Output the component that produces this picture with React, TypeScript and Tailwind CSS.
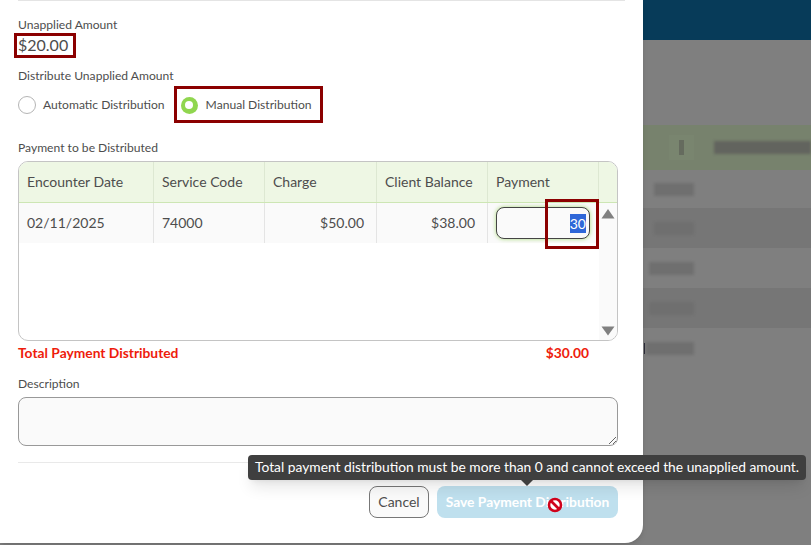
const COLUMNS = [
  { label: "Encounter Date", width: "w-[135px]" },
  { label: "Service Code", width: "w-[111px]" },
  { label: "Charge", width: "w-[112px]" },
  { label: "Client Balance", width: "w-[111px]" },
  { label: "Payment", width: "w-[111px]" },
];

const BACK_ROWS = [
  { width: "w-[40px]", height: "h-[38px]", bg: "bg-[#7f7f7f]" },
  { width: "w-[40px]", height: "h-10", bg: "bg-[#767676]" },
  { width: "w-[45px]", height: "h-10", bg: "bg-[#7f7f7f]" },
  { width: "w-[45px]", height: "h-10", bg: "bg-[#767676]" },
  { width: "w-[48px]", height: "h-10", bg: "bg-[#7f7f7f]" },
];

function Backdrop() {
  return (
    <div className="absolute inset-0 flex flex-col bg-[#7f7f7f]">
      <div className="h-10 bg-[#073b59]" />
      <div className="mt-[85px] flex h-[45px] items-center bg-[#77826d] pl-[669px]">
        <div className="flex h-[25px] w-[25px] items-center justify-center bg-[#79856f]">
          <div className="h-[15px] w-[5px] bg-[#656b5e]" />
        </div>
        <div className="ml-5 h-[13px] w-[97px] bg-[#62645e] blur-[1.5px]" />
      </div>
      {BACK_ROWS.map((row, i) => (
        <div key={i} className={`flex items-center justify-end pr-[117px] ${row.height} ${row.bg}`}>
          <div className={`h-[13px] bg-[#6f6f6f] blur-[1.5px] ${row.width}`} />
        </div>
      ))}
    </div>
  );
}

function ManualBox({ className }: { className: string }) {
  return <div className={`pointer-events-none absolute border-[3px] border-[#8b0000] ${className}`} />;
}

export default function App() {
  return (
    <div className="relative h-[545px] w-[811px] overflow-hidden font-['Lato',sans-serif] text-[#4d4d4d]">
      <Backdrop />

      {/* i-beam left behind on the page */}
      <div className="absolute left-[644px] top-[343px] h-[11px] w-px bg-[#2c2c3a]" />

      <div className="absolute left-0 top-0 flex h-[543px] w-[643px] flex-col rounded-br-[18px] bg-white px-[18px] shadow-md">
        <div className="h-px bg-[#e4e4e4]" />

        <div className="mt-4 text-[12.1px] leading-[15px]">Unapplied Amount</div>
        <div className="mt-[3px] text-base leading-5">$20.00</div>

        <div className="mt-[13px] text-[12.1px] leading-[15px]">Distribute Unapplied Amount</div>
        <div className="mt-[13px] flex h-[18px] items-center">
          <span className="h-[18px] w-[18px] rounded-full border border-[#b5b5b5] bg-white" />
          <span className="ml-[7px] text-[12.1px]">Automatic Distribution</span>
          <span className="ml-4 flex h-[17px] w-[17px] items-center justify-center rounded-full bg-[#90d64f]">
            <span className="h-2 w-2 rounded-full bg-white" />
          </span>
          <span className="ml-2 text-[12.1px]">Manual Distribution</span>
        </div>

        <div className="mt-[26px] text-[12.1px] leading-[15px]">Payment to be Distributed</div>

        <div className="mt-[6px] flex h-[180px] w-[600px] flex-col overflow-hidden rounded-[10px] border border-[#c4c4c4]">
          <div className="flex h-[41px] shrink-0 border-b border-[#cde6b4] bg-[#eef7e4] text-sm">
            {COLUMNS.map((col) => (
              <div key={col.label} className={`flex items-center border-r border-[#dde8d2] px-2 ${col.width}`}>
                {col.label}
              </div>
            ))}
          </div>
          <div className="flex flex-1">
            <div className="flex h-10 w-[580px] bg-[#fafafa] text-sm">
              <div className="flex w-[135px] items-center border-r border-[#e4e4e4] px-2">02/11/2025</div>
              <div className="flex w-[111px] items-center border-r border-[#e4e4e4] px-2">74000</div>
              <div className="flex w-[112px] items-center justify-end border-r border-[#e4e4e4] px-3">$50.00</div>
              <div className="flex w-[111px] items-center justify-end border-r border-[#e4e4e4] px-3">$38.00</div>
              <div className="flex w-[111px] items-center pl-2">
                <div className="flex h-8 w-[94px] items-center justify-end rounded-lg border border-[#444] bg-[#fafafa] pr-[3px] shadow-[0_0_4px_#a9d97a]">
                  <span className="bg-[#2f67d8] leading-[19px] text-white">30</span>
                </div>
              </div>
            </div>
            <div className="flex flex-1 flex-col items-center justify-between bg-[#fafafa] pb-1 pt-[6px]">
              <svg width="14" height="10" viewBox="0 0 14 10">
                <path d="M7 0 L13.5 9.5 L0.5 9.5 Z" fill="#808080" />
              </svg>
              <svg width="14" height="10" viewBox="0 0 14 10">
                <path d="M0.5 0.5 L13.5 0.5 L7 9.5 Z" fill="#808080" />
              </svg>
            </div>
          </div>
        </div>

        <div className="mt-[3px] flex w-[571px] justify-between text-[13.8px] font-bold leading-[18px] text-[#ee1c0c]">
          <span>Total Payment Distributed</span>
          <span>$30.00</span>
        </div>

        <div className="mt-[14px] text-[12.1px] leading-[15px]">Description</div>
        <textarea className="mt-[6px] h-[49px] w-[600px] shrink-0 rounded-lg border border-[#999] bg-[#fafafa] outline-none" />

        <div className="mt-4 h-px w-[600px] bg-[#e9e9e9]" />

        <div className="mt-[23px] flex w-[600px] justify-end gap-2">
          <button className="h-8 w-[60px] rounded-lg border border-[#777] bg-[#fafafa] text-sm">Cancel</button>
          <button className="h-8 w-[181px] rounded-lg bg-[#bfe0ee] text-[13.8px] font-bold text-white">
            Save Payment Distribution
          </button>
        </div>
      </div>

      <ManualBox className="left-[14px] top-[33px] h-[25px] w-[62px]" />
      <ManualBox className="left-[174px] top-[86px] h-[37px] w-[149px]" />
      <ManualBox className="left-[545px] top-[199px] h-[50px] w-[54px]" />

      <div className="absolute left-[248px] top-[455px] flex h-[25px] w-[558px] items-center justify-center rounded bg-[#3f3f3f] text-[13.8px] text-white shadow-lg">
        Total payment distribution must be more than 0 and cannot exceed the unapplied amount.
        <div className="absolute left-[273px] top-[25px] h-0 w-0 border-x-[6px] border-t-[6px] border-x-transparent border-t-[#3f3f3f]" />
      </div>

      <svg className="absolute left-[547px] top-[497px]" width="16" height="16" viewBox="0 0 16 16">
        <circle cx="8" cy="8" r="6" fill="white" stroke="#d0021b" strokeWidth="2.6" />
        <path d="M4 4 L12 12" stroke="#d0021b" strokeWidth="2.6" />
      </svg>
    </div>
  );
}
